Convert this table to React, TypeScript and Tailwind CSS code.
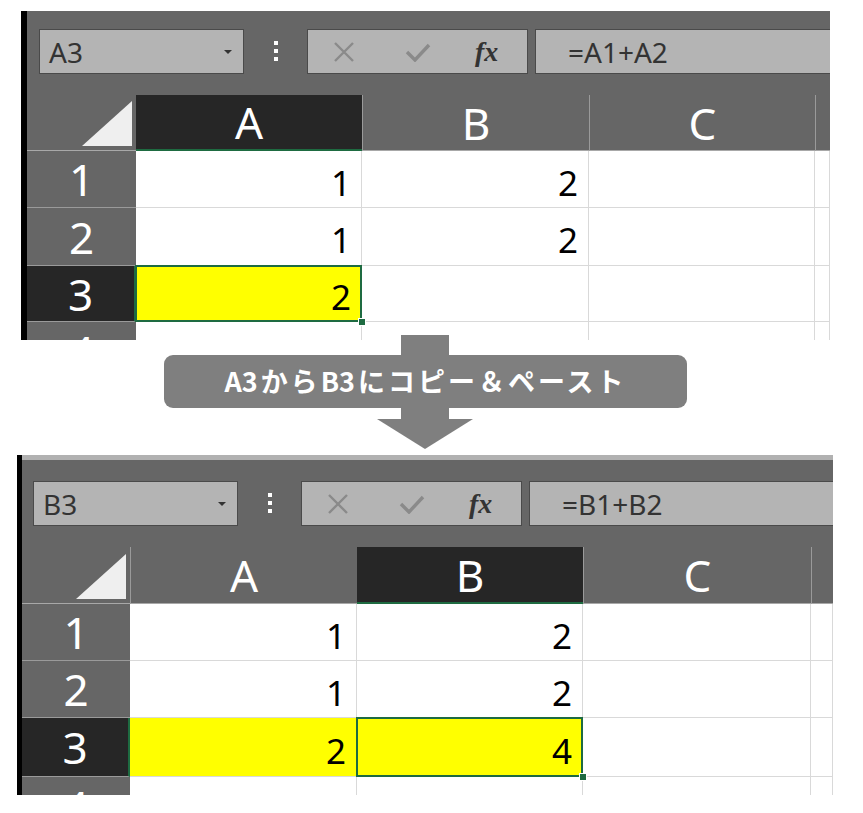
import React from "react";

type Cell = { v?: string; yellow?: boolean; sel?: boolean };

interface SheetProps {
  name: string;
  formula: string;
  selCol: number;
  cells: Cell[][];
  outerClass: string;
  barClass: string;
  toolbarClass: string;
  gridClass: string;
  rowHeights: number[];
  topStrip?: boolean;
}

const GREEN = "bg-[#1e6b41]";

const Dots = () => (
  <div className="flex w-[63px] flex-col items-center gap-[4px] pt-[12px]">
    <div className="h-[4px] w-[4px] bg-white" />
    <div className="h-[4px] w-[4px] bg-white" />
    <div className="h-[4px] w-[4px] bg-white" />
  </div>
);

const Toolbar = ({ name, formula, cls }: { name: string; formula: string; cls: string }) => (
  <div className={cls}>
    <div className="flex h-[45px] w-[205px] items-center justify-between border border-[#4a4a4a] bg-[#b4b4b4] pl-[9px] pr-[10px] text-[28px] text-[#333]">
      <span className="leading-none">{name}</span>
      <svg width="10" height="6" viewBox="0 0 10 6">
        <polygon points="1,1 9,1 5,5" fill="#333" />
      </svg>
    </div>
    <Dots />
    <div className="flex h-[45px] w-[221px] items-center border border-[#4a4a4a] bg-[#b4b4b4]">
      <svg className="ml-[25px]" width="22" height="20" viewBox="0 0 22 20">
        <path d="M2 1 L20 19 M20 1 L2 19" stroke="#8a8a8a" strokeWidth="2.4" fill="none" />
      </svg>
      <svg className="ml-[50px]" width="26" height="20" viewBox="0 0 26 20">
        <path d="M2 10 L10 18 L24 3" stroke="#8a8a8a" strokeWidth="3.4" fill="none" />
      </svg>
      <span className="ml-[44px] font-['Liberation_Serif',serif] text-[28px] font-bold italic leading-none text-[#333]">
        fx
      </span>
    </div>
    <div className="ml-[7px] flex h-[45px] flex-1 items-center border-y border-l border-[#4a4a4a] bg-[#b4b4b4] pl-[32px] text-[28px] leading-none text-[#333]">
      {formula}
    </div>
  </div>
);

const Sheet = (p: SheetProps) => {
  const letters = ["A", "B", "C", ""];
  return (
    <div className={p.outerClass}>
      <div className={p.barClass} />
      <div className="flex min-w-0 flex-1 flex-col">
        {p.topStrip && <div className="h-[5px] bg-[#b1b1b1]" />}
        <Toolbar name={p.name} formula={p.formula} cls={p.toolbarClass} />
        <div className={p.gridClass}>
          {/* corner */}
          <div className="flex items-end justify-end border-b border-[#a8a8a8] bg-[#666] p-[4px]">
            <svg width="50" height="45" viewBox="0 0 50 45">
              <polygon points="50,0 50,45 0,45" fill="#efefef" />
            </svg>
          </div>
          {letters.map((l, i) => (
            <div
              key={l + i}
              className={
                i === p.selCol
                  ? "flex items-center justify-center border-b-2 border-[#1e6b41] bg-[#262626] text-[44px] leading-none text-white"
                  : "flex items-center justify-center border-b border-l border-b-[#a8a8a8] border-l-[#9a9a9a] bg-[#666] text-[44px] leading-none text-white"
              }
            >
              {l}
            </div>
          ))}
          {p.cells.map((row, r) => {
            const h = p.rowHeights[r];
            const last = r === p.cells.length - 1;
            return (
              <React.Fragment key={r}>
                <div
                  className={
                    r === 2
                      ? "border-b border-r-2 border-b-[#9a9a9a] border-r-[#1e6b41] bg-[#262626]"
                      : last
                        ? "overflow-hidden bg-[#666]"
                        : "border-b border-[#9a9a9a] bg-[#666]"
                  }
                >
                  {last ? (
                    <div className="flex h-[57px] items-center justify-center text-[44px] leading-none text-white">
                      {r + 1}
                    </div>
                  ) : (
                    <div
                      className="flex items-center justify-center text-[44px] leading-none text-white"
                      style={{ height: h - 1 }}
                    >
                      {r + 1}
                    </div>
                  )}
                </div>
                {row.map((c, ci) => (
                  <div
                    key={ci}
                    className={
                      (c.yellow ? "bg-[#ffff00] " : "bg-white ") +
                      (last ? "" : "border-b ") +
                      "relative border-r border-[#d9d9d9]"
                    }
                  >
                    <div className="flex h-full items-center justify-end pr-[10px] pt-[6px] text-[35px] leading-none text-black">
                      {c.v}
                    </div>
                    {c.sel && (
                      <>
                        <div className="absolute -inset-[1px] border-2 border-[#1e6b41]" />
                        <div className={"absolute -bottom-[5px] -right-[5px] z-10 h-[8px] w-[8px] border border-white " + GREEN} />
                      </>
                    )}
                  </div>
                ))}
              </React.Fragment>
            );
          })}
        </div>
      </div>
    </div>
  );
};

const topCells: Cell[][] = [
  [{ v: "1" }, { v: "2" }, {}, {}],
  [{ v: "1" }, { v: "2" }, {}, {}],
  [{ v: "2", yellow: true, sel: true }, {}, {}, {}],
  [{}, {}, {}, {}],
];

const bottomCells: Cell[][] = [
  [{ v: "1" }, { v: "2" }, {}, {}],
  [{ v: "1" }, { v: "2" }, {}, {}],
  [{ v: "2", yellow: true }, { v: "4", yellow: true, sel: true }, {}, {}],
  [{}, {}, {}, {}],
];

export default function App() {
  return (
    <div className="h-[813px] w-[863px] overflow-hidden bg-white font-['Noto_Sans','Noto_Sans_CJK_JP',sans-serif]">
      <div className="pt-[11px]">
        <Sheet
          name="A3"
          formula="=A1+A2"
          selCol={0}
          cells={topCells}
          outerClass="ml-[21px] flex w-[809px]"
          barClass="w-[6px] bg-black"
          toolbarClass="flex h-[84px] items-start bg-[#666] pl-[12px] pt-[18px]"
          gridClass="grid grid-cols-[109px_226px_227px_226px_1fr] grid-rows-[56px_57px_58px_56px_18px]"
          rowHeights={[57, 58, 56, 18]}
        />
      </div>

      <div className="relative flex h-[115px] pt-[15px]">
        <svg className="absolute left-[377px] -top-[5px]" width="96" height="115" viewBox="0 0 96 115">
          <rect x="24" y="0" width="48" height="85" fill="#7f7f7f" />
          <polygon points="0,84 96,84 48,114" fill="#7f7f7f" />
        </svg>
        <div className="relative ml-[164px] flex h-[53px] w-[523px] items-center justify-center rounded-[9px] bg-[#7f7f7f] font-['Noto_Sans_CJK_JP',sans-serif] text-[27px] font-bold tracking-[3px] text-white">
          <span className="tracking-[0px]">A3</span>
          <span className="ml-[3px]">から</span>
          <span className="tracking-[0px]">B3</span>
          <span className="ml-[3px]">にコピー＆ペースト</span>
        </div>
      </div>

      <Sheet
        name="B3"
        formula="=B1+B2"
        selCol={1}
        cells={bottomCells}
        outerClass="ml-[17px] flex w-[816px]"
        barClass="w-[5px] bg-black"
        toolbarClass="flex h-[87px] items-start bg-[#666] pl-[11px] pt-[21px]"
        gridClass="grid grid-cols-[108px_227px_226px_228px_1fr] grid-rows-[57px_57px_57px_59px_18px]"
        rowHeights={[57, 57, 59, 18]}
        topStrip
      />
    </div>
  );
}
